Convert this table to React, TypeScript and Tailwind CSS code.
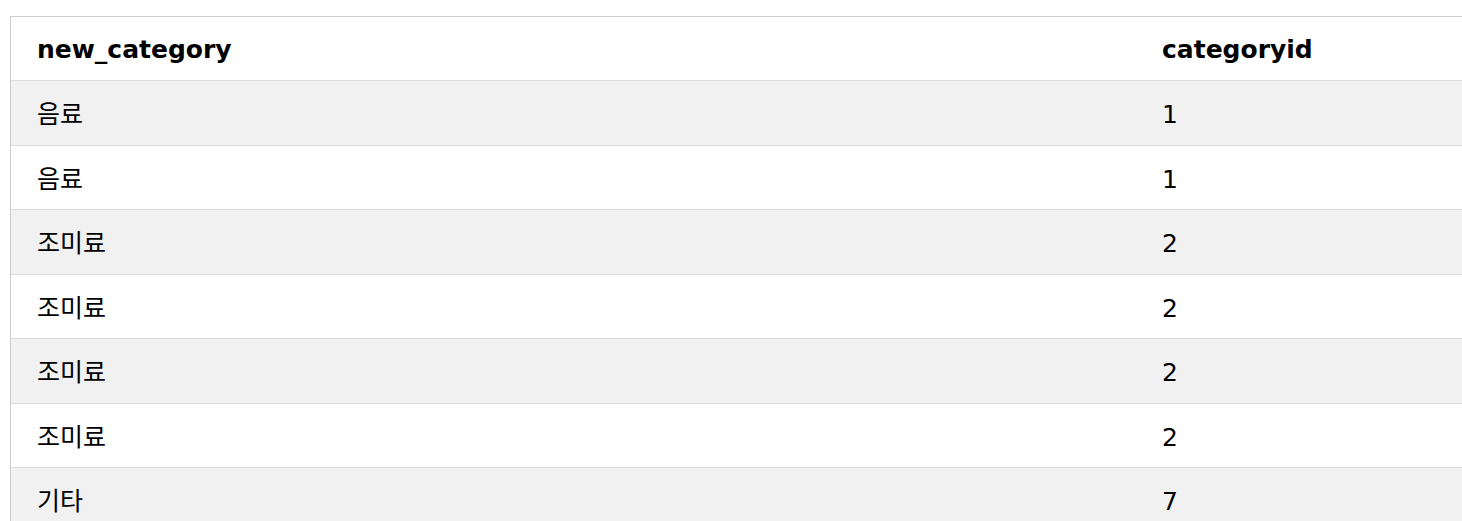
const rows: [string, string][] = [
  ["음료", "1"],
  ["음료", "1"],
  ["조미료", "2"],
  ["조미료", "2"],
  ["조미료", "2"],
  ["조미료", "2"],
  ["기타", "7"],
];

function App() {
  return (
    <div className="w-[1462px] h-[521px] overflow-hidden bg-white pt-[16px] pl-[10px]">
      <div
        className="w-[1460px] border-l border-t border-[#cccccc] text-black text-[25px]"
        style={{ fontFamily: '"DejaVu Sans", Verdana, "Noto Sans CJK KR", sans-serif' }}
      >
        <div className="grid grid-cols-[1125px_1fr] h-[64px] pt-[3px] items-center border-b border-[#dddddd] bg-white font-bold">
          <div className="pl-[26px]">new_category</div>
          <div className="pl-[26px]">categoryid</div>
        </div>
        {rows.map(([name, id], i) => (
          <div
            key={i}
            className={
              "grid grid-cols-[1125px_1fr] h-[64.5px] pt-[4px] items-center border-b border-[#dddddd] " +
              (i % 2 === 0 ? "bg-[#f1f1f1]" : "bg-white")
            }
          >
            <div className="pl-[26px]">{name}</div>
            <div className="pl-[26px]">{id}</div>
          </div>
        ))}
      </div>
    </div>
  );
}

export default App;
